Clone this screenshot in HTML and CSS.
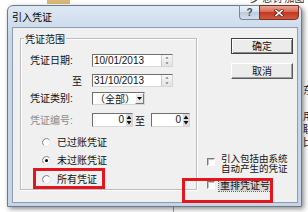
FILE: index.html
```html
<!DOCTYPE html>
<html>
<head>
<meta charset="utf-8">
<title>引入凭证</title>
<link rel="stylesheet" href="styles.css">
</head>
<body>
<div class="blob"></div>
<div class="toptext">步 惩罚 加图</div>
<div class="sidetext">东<br><br>用<br>联<br>比</div>
<div class="vline"></div>

<div class="window">
  <div class="titlebar">
    <span class="title">引入凭证</span>
    <div class="caption-btns">
      <div class="cbtn help">?</div>
      <div class="cbtn close">
        <svg width="10" height="8" viewBox="0 0 10 8"><path d="M2 1.5L8 6.5M8 1.5L2 6.5" stroke="#6b2218" stroke-width="3.2" stroke-linecap="square"/><path d="M2 1.5L8 6.5M8 1.5L2 6.5" stroke="#fff" stroke-width="1.6" stroke-linecap="square"/></svg>
      </div>
    </div>
  </div>
  <div class="client">
    <div class="group">
      <div class="legend">凭证范围</div>
      <div class="row r1">
        <span class="lbl">凭证日期:</span>
        <div class="field date"><span class="val">10/01/2013</span><span class="dspin"><svg width="10" height="11" viewBox="0 0 10 11"><path d="M3.5 3.5L5 2L6.5 3.5Z" fill="#555"/><path d="M3.5 7.5L5 9L6.5 7.5Z" fill="#555"/></svg></span></div>
      </div>
      <div class="row r2">
        <span class="lbl right">至</span>
        <div class="field date"><span class="val">31/10/2013</span><span class="dspin"><svg width="10" height="11" viewBox="0 0 10 11"><path d="M3.5 3.5L5 2L6.5 3.5Z" fill="#555"/><path d="M3.5 7.5L5 9L6.5 7.5Z" fill="#555"/></svg></span></div>
      </div>
      <div class="row r3">
        <span class="lbl">凭证类别:</span>
        <div class="field combo"><span class="val cval">（全部）</span><span class="drop"><svg width="7" height="5" viewBox="0 0 7 5"><path d="M1 1L6 1L3.5 4Z" fill="#000"/></svg></span></div>
      </div>
      <div class="row r4">
        <span class="lbl disabled">凭证编号:</span>
        <div class="field num n1"><span class="val nval">0</span><span class="nspin"><svg width="6" height="12" viewBox="0 0 6 12"><path d="M0.5 5L3 1.5L5.5 5Z" fill="#111"/><path d="M0.5 7L3 10.5L5.5 7Z" fill="#111"/></svg></span></div>
        <span class="to">至</span>
        <div class="field num n2"><span class="val nval">0</span><span class="nspin"><svg width="6" height="12" viewBox="0 0 6 12"><path d="M0.5 5L3 1.5L5.5 5Z" fill="#111"/><path d="M0.5 7L3 10.5L5.5 7Z" fill="#111"/></svg></span></div>
      </div>
      <div class="radio ra1">
        <svg width="9" height="9" viewBox="0 0 9 9"><circle cx="4.5" cy="4.5" r="4" fill="#fff"/><path d="M1.67 7.33A4 4 0 0 1 7.33 1.67" fill="none" stroke="#7a7a7a"/><path d="M7.33 1.67A4 4 0 0 1 1.67 7.33" fill="none" stroke="#e2e2e2"/></svg>
        <span class="rtext">已过账凭证</span>
      </div>
      <div class="radio ra2">
        <svg width="9" height="9" viewBox="0 0 9 9"><circle cx="4.5" cy="4.5" r="4" fill="#fff"/><path d="M1.67 7.33A4 4 0 0 1 7.33 1.67" fill="none" stroke="#7a7a7a"/><path d="M7.33 1.67A4 4 0 0 1 1.67 7.33" fill="none" stroke="#e2e2e2"/><circle cx="4.5" cy="4.5" r="1.5" fill="#000"/></svg>
        <span class="rtext">未过账凭证</span>
      </div>
      <div class="radio ra3">
        <svg width="9" height="9" viewBox="0 0 9 9"><circle cx="4.5" cy="4.5" r="4" fill="#fff"/><path d="M1.67 7.33A4 4 0 0 1 7.33 1.67" fill="none" stroke="#7a7a7a"/><path d="M7.33 1.67A4 4 0 0 1 1.67 7.33" fill="none" stroke="#e2e2e2"/></svg>
        <span class="rtext">所有凭证</span>
      </div>
    </div>
    <div class="side">
      <div class="btn default">确定</div>
      <div class="btn cancel">取消</div>
      <div class="chk c1"><span class="box"></span><span class="ctext two"><span class="ln">引入包括由系统</span><span class="ln">自动产生的凭证</span></span></div>
      <div class="chk c2"><span class="box"></span><span class="ctext focus">重排凭证号</span></div>
    </div>
  </div>
</div>

<div class="mark m1"></div>
<div class="mark m2"></div>
</body>
</html>
```

FILE: styles.css
```css
* { box-sizing: border-box; }
html, body { margin: 0; }
body {
  width: 308px;
  height: 212px;
  overflow: hidden;
  position: relative;
  background: #fff;
  padding: 5px 0 0 7px;
  font-family: "Liberation Sans", "Noto Sans CJK SC", sans-serif;
  font-size: 10px;
  color: #111;
}

/* background desktop fragments */
.blob { position: absolute; left: 47px; top: 0; width: 23px; height: 4px; background: #d9b877; }
.toptext { position: absolute; left: 250px; top: -7px; font-size: 10px; line-height: 10px; color: #333; font-family: "Noto Sans CJK SC", sans-serif; }
.sidetext { position: absolute; left: 303px; top: 83px; font-size: 10px; line-height: 13px; color: #222; font-family: "Noto Sans CJK SC", sans-serif; }
.vline { position: absolute; left: 173px; top: 205px; width: 1px; height: 7px; background: #999; }

.window {
  position: relative;
  z-index: 1;
  width: 295px;
  height: 202px;
  border: 1px solid #6a7888;
  border-radius: 6px 6px 0 0;
  background: linear-gradient(#dde8f4, #c8d7e8 30px, #c5d4e6);
  box-shadow: 2px 2px 5px rgba(0, 0, 0, 0.45);
  display: flex;
  flex-direction: column;
}
.titlebar { height: 21px; display: flex; align-items: flex-start; flex: none; }
.title {
  padding-left: 4px;
  line-height: 21px;
  font-family: "Noto Sans CJK SC", sans-serif;
  font-size: 10px;
  color: #000;
}
.caption-btns { margin-left: auto; margin-right: 2px; margin-top: -1px; display: flex; }
.cbtn { height: 15px; }
.help {
  width: 20px;
  border: 1px solid #77879a;
  border-right: none;
  border-radius: 0 0 0 4px;
  background: linear-gradient(#eef3f9, #d5dfeb 50%, #bccbdc 50%, #d3dfec);
  font: bold 10px/13px "Liberation Sans", sans-serif;
  text-align: center;
  color: #3e4e60;
}
.close {
  width: 40px;
  border: 1px solid #7a2f25;
  border-radius: 0 0 4px 0;
  background: linear-gradient(#eaa595, #d66a55 45%, #c2381f 50%, #d25a3f);
  display: flex;
  align-items: center;
  justify-content: center;
}

.client {
  height: 176px;
  margin: 0 3px 3px 4px;
  border: 1px solid #8e9cac;
  background: #f0f0f0;
  display: flex;
  align-items: flex-start;
  flex: none;
}

/* group box */
.group {
  margin: 10px 0 0 7px;
  width: 177px;
  height: 152px;
  border: 1px solid #bcbcbc;
  box-shadow: inset 1px 1px 0 #fff, 1px 1px 0 #fff;
  padding-left: 9px;
  display: flex;
  flex-direction: column;
  align-items: flex-start;
}
.legend {
  margin: -7px 0 0 -6px;
  height: 13px;
  line-height: 13px;
  padding: 0 1px;
  background: #f0f0f0;
  font-family: "Noto Sans CJK SC", sans-serif;
}
.row { display: flex; align-items: center; }
.r1 { margin-top: 9px; }
.r2 { margin-top: 7px; }
.r3 { margin-top: 5px; }
.r4 { margin-top: 8px; }
.lbl { width: 62px; line-height: 13px; white-space: nowrap; }
.lbl.right { text-align: right; padding-right: 10px; font-family: "Noto Sans CJK SC", sans-serif; }
.lbl.disabled { color: #8a8a8a; }

.field {
  display: flex;
  background: #fff;
  border: 1px solid;
  border-color: #6e6e6e #d6d6d6 #d6d6d6 #6e6e6e;
}
.val { flex: 1; line-height: 11px; padding-left: 1px; white-space: nowrap; overflow: hidden; }
.date { width: 81px; height: 13px; }
.dspin {
  width: 11px;
  border-left: 1px solid #c9c9c9;
  background: linear-gradient(#f6f6f6, #e4e4e4);
  display: flex;
  align-items: center;
  justify-content: center;
}
.combo { width: 53px; height: 13px; }
.cval { padding-left: 2px; font-family: "Noto Sans CJK SC", sans-serif; }
.drop {
  width: 9px;
  background: #e9e9e9;
  border: 1px solid;
  border-color: #fff #7a7a7a #7a7a7a #fff;
  display: flex;
  align-items: center;
  justify-content: center;
}
.num { height: 14px; }
.n1 { width: 41px; }
.n2 { width: 39px; }
.nval { text-align: right; padding-right: 2px; line-height: 12px; }
.nspin { width: 6px; display: flex; align-items: center; background: #dcdcdc; }
.to { margin: 0 6px 0 2px; line-height: 13px; font-family: "Noto Sans CJK SC", sans-serif; }

.radio { display: flex; align-items: center; height: 12px; margin-left: 12px; }
.radio svg { flex: none; }
.rtext { margin-left: 6px; line-height: 12px; font-family: "Noto Sans CJK SC", sans-serif; }
.ra1 { margin-top: 9px; }
.ra2 { margin-top: 6px; }
.ra3 { margin-top: 7px; }

/* right side */
.side { width: 99px; padding-top: 10px; display: flex; flex-direction: column; align-items: flex-start; }
.btn {
  margin-left: 34px;
  width: 62px;
  height: 16px;
  line-height: 14px;
  text-align: center;
  background: #ececec;
  border: 1px solid;
  font-family: "Noto Sans CJK SC", sans-serif;
}
.btn.default {
  border-color: #404040;
  box-shadow: inset 1px 1px 0 #fff, inset -1px -1px 0 #8a8a8a;
}
.btn.cancel {
  margin-top: 9px;
  border-color: #fff #5a5a5a #5a5a5a #fff;
  box-shadow: inset -1px -1px 0 #a0a0a0;
}
.chk { display: flex; margin-left: 10px; }
.c1 { margin-top: 74px; align-items: flex-start; }
.c2 { margin-top: 6px; align-items: center; }
.box {
  flex: none;
  width: 8px;
  height: 8px;
  background: #fff;
  border: 1px solid;
  border-color: #7a7a7a #fff #fff #7a7a7a;
  box-shadow: inset 1px 1px 0 #c4c4c4;
}
.c1 .box { margin-top: 5px; }
.ctext { margin-left: 6px; line-height: 10px; font-family: "Noto Sans CJK SC", sans-serif; white-space: nowrap; }
.ctext.two { display: flex; flex-direction: column; font-size: 9.5px; }
.ln { display: block; height: 10px; line-height: 10px; }
.ctext.focus {
  margin-left: 4px;
  padding: 0 1px;
  line-height: 12px;
  background: #d4d4d4;
  outline: 1px dotted #666;
}

/* red annotation frames */
.mark { position: absolute; z-index: 2; border: 3px solid #e3161d; }
.m1 { left: 33px; top: 168px; width: 72px; height: 21px; }
.m2 { left: 182px; top: 178px; width: 91px; height: 25px; }
```
